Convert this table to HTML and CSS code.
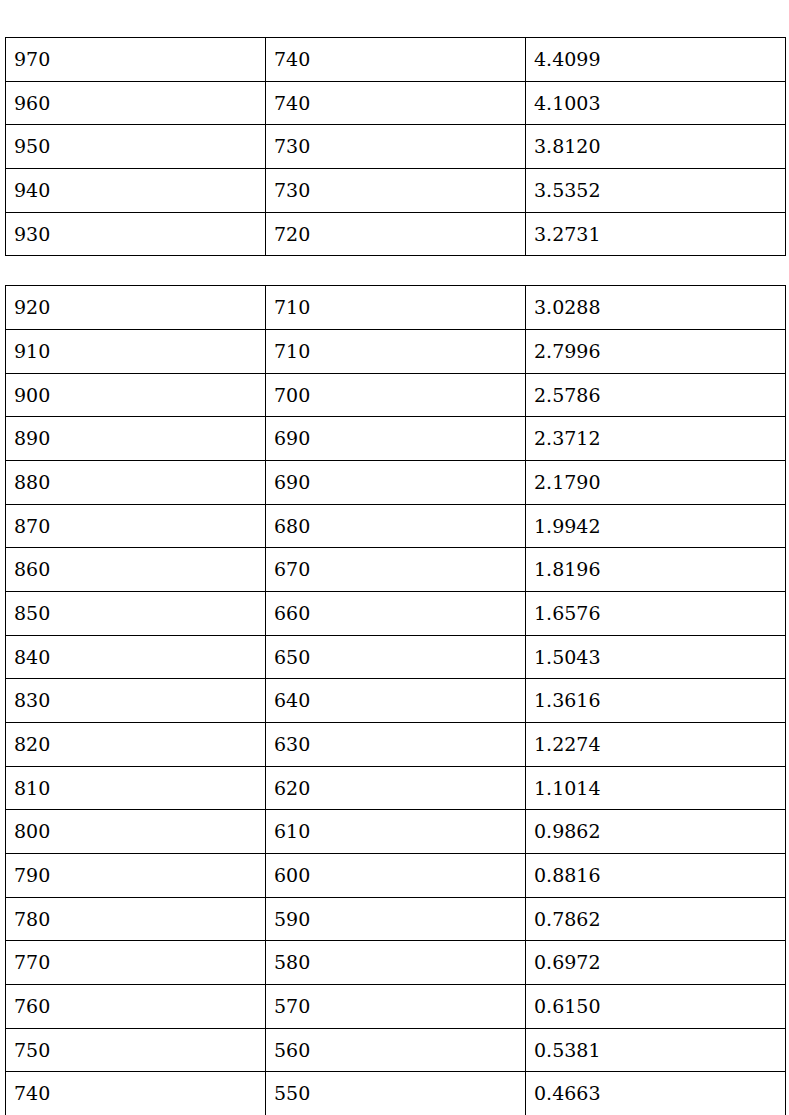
FILE: index.html
```html
<!DOCTYPE html>
<html lang="en">
<head>
<meta charset="utf-8">
<title>Table</title>
<link rel="stylesheet" href="styles.css">
</head>
<body>
<div class="page">
  <table class="data">
    <tr><td>970</td><td>740</td><td>4.4099</td></tr>
    <tr><td>960</td><td>740</td><td>4.1003</td></tr>
    <tr><td>950</td><td>730</td><td>3.8120</td></tr>
    <tr><td>940</td><td>730</td><td>3.5352</td></tr>
    <tr><td>930</td><td>720</td><td>3.2731</td></tr>
  </table>
  <table class="data data-second">
    <tr><td>920</td><td>710</td><td>3.0288</td></tr>
    <tr><td>910</td><td>710</td><td>2.7996</td></tr>
    <tr><td>900</td><td>700</td><td>2.5786</td></tr>
    <tr><td>890</td><td>690</td><td>2.3712</td></tr>
    <tr><td>880</td><td>690</td><td>2.1790</td></tr>
    <tr><td>870</td><td>680</td><td>1.9942</td></tr>
    <tr><td>860</td><td>670</td><td>1.8196</td></tr>
    <tr><td>850</td><td>660</td><td>1.6576</td></tr>
    <tr><td>840</td><td>650</td><td>1.5043</td></tr>
    <tr><td>830</td><td>640</td><td>1.3616</td></tr>
    <tr><td>820</td><td>630</td><td>1.2274</td></tr>
    <tr><td>810</td><td>620</td><td>1.1014</td></tr>
    <tr><td>800</td><td>610</td><td>0.9862</td></tr>
    <tr><td>790</td><td>600</td><td>0.8816</td></tr>
    <tr><td>780</td><td>590</td><td>0.7862</td></tr>
    <tr><td>770</td><td>580</td><td>0.6972</td></tr>
    <tr><td>760</td><td>570</td><td>0.6150</td></tr>
    <tr><td>750</td><td>560</td><td>0.5381</td></tr>
    <tr><td>740</td><td>550</td><td>0.4663</td></tr>
  </table>
</div>
</body>
</html>
```

FILE: styles.css
```css
html {
  overflow: hidden;
  background: #ffffff;
}

body {
  margin: 0;
  background: #ffffff;
  color: #000000;
  font-family: "DejaVu Serif", "Liberation Serif", serif;
}

.page {
  padding: 37px 0 0 5px;
}

.data {
  width: 781px;
  border-collapse: collapse;
  table-layout: fixed;
}

.data-second {
  margin-top: 29px;
}

.data td {
  width: 33.33%;
  border: 1px solid #000000;
  padding: 10px 8px;
  font-size: 19px;
  line-height: 22.67px;
  font-variant-numeric: oldstyle-nums;
  color: #000000;
  vertical-align: middle;
  text-align: left;
}
```
